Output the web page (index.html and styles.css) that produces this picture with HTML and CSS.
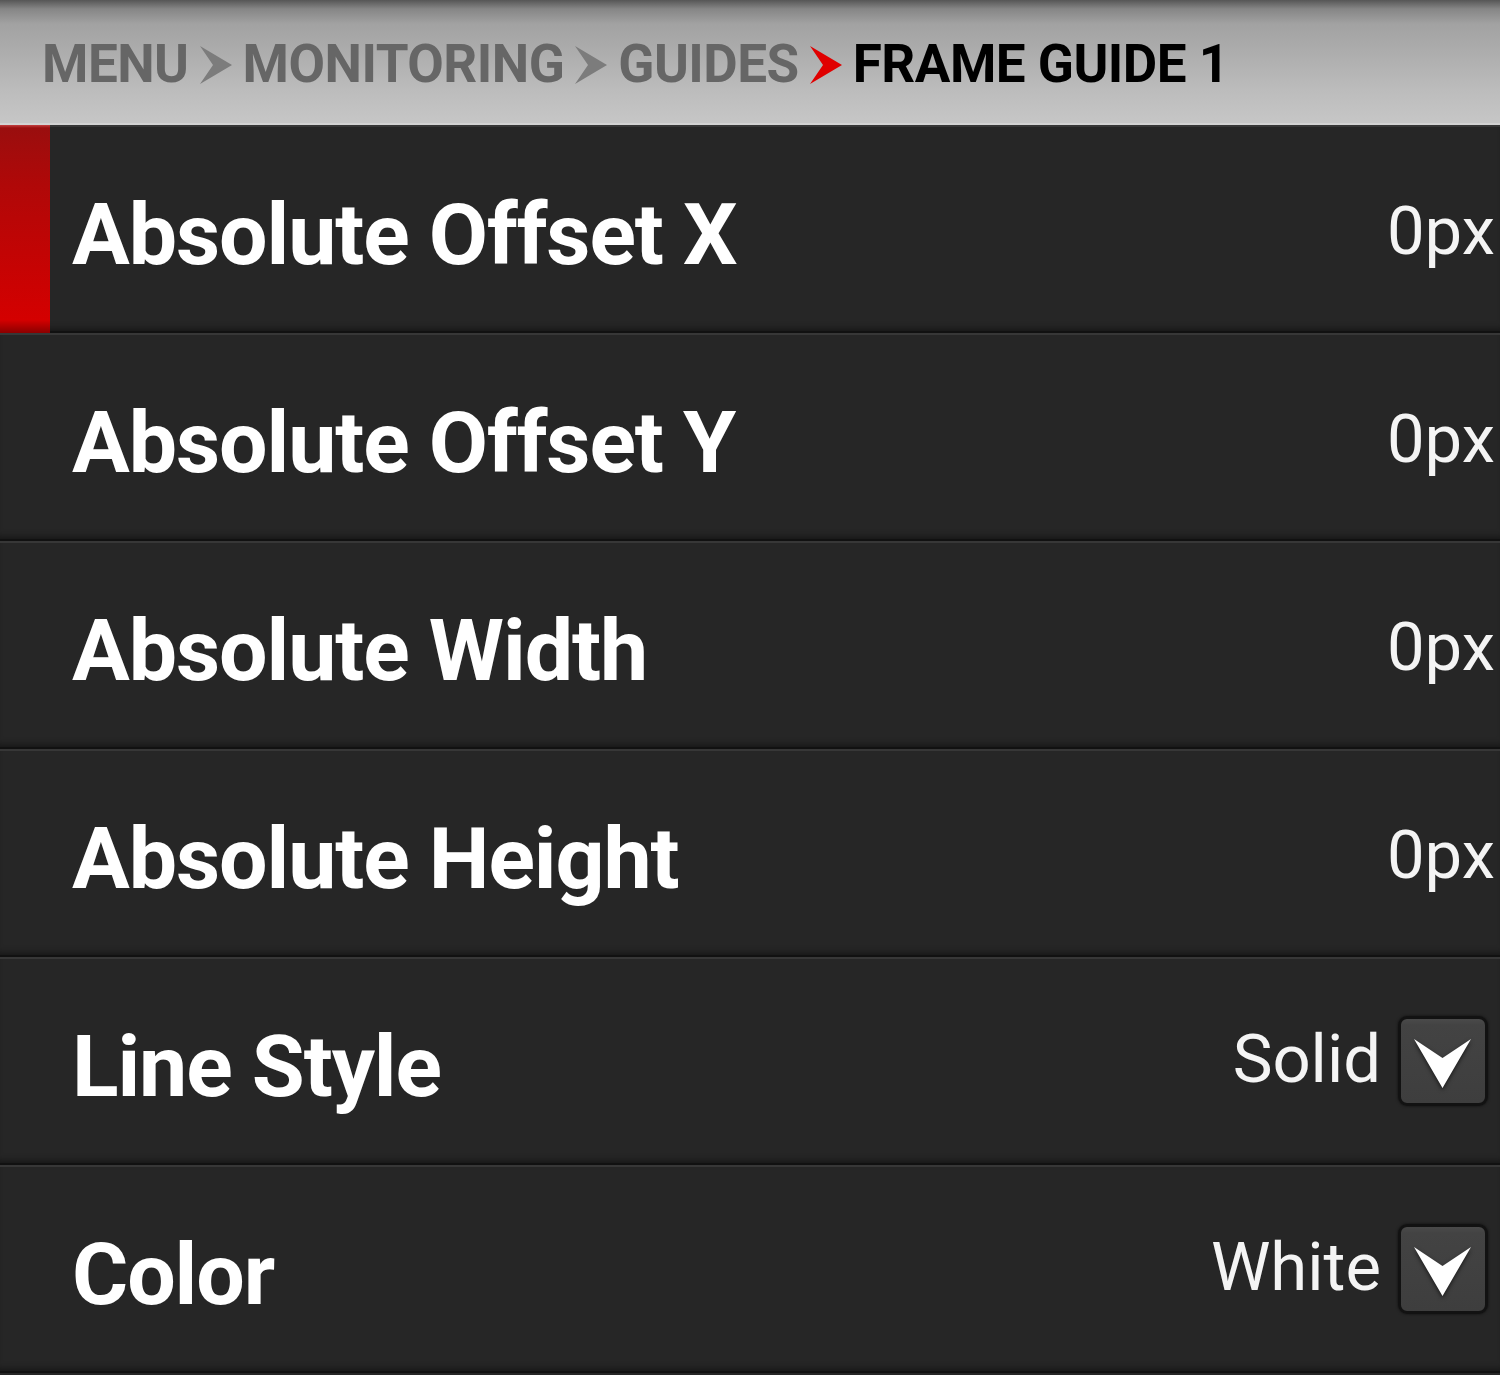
FILE: index.html
```html
<!DOCTYPE html>
<html lang="en">
<head>
<meta charset="utf-8">
<title>Frame Guide 1</title>
<link rel="stylesheet" href="styles.css">
</head>
<body>
<div class="screen">
  <header class="crumbs">
    <span class="crumb">MENU</span>
    <svg class="chev" viewBox="0 0 32 38" width="32" height="38"><path d="M0 0 L32 19 L0 38 L13 19 Z" fill="#7c7c7c"/></svg>
    <span class="crumb">MONITORING</span>
    <svg class="chev" viewBox="0 0 32 38" width="32" height="38"><path d="M0 0 L32 19 L0 38 L13 19 Z" fill="#7c7c7c"/></svg>
    <span class="crumb">GUIDES</span>
    <svg class="chev" viewBox="0 0 32 38" width="32" height="38"><path d="M0 0 L32 19 L0 38 L13 19 Z" fill="#e00000"/></svg>
    <span class="crumb current">FRAME GUIDE 1</span>
  </header>
  <main class="list">
    <div class="row selected">
      <span class="marker"></span>
      <span class="label">Absolute Offset X</span>
      <span class="value">0px</span>
    </div>
    <div class="row">
      <span class="label">Absolute Offset Y</span>
      <span class="value">0px</span>
    </div>
    <div class="row">
      <span class="label">Absolute Width</span>
      <span class="value">0px</span>
    </div>
    <div class="row">
      <span class="label">Absolute Height</span>
      <span class="value">0px</span>
    </div>
    <div class="row has-drop">
      <span class="label">Line Style</span>
      <span class="value">Solid</span>
      <span class="drop"><svg viewBox="0 0 58 50" width="58" height="50"><path d="M0 0 L28.5 19 L57 0 L28.5 49 Z" fill="#ffffff"/></svg></span>
    </div>
    <div class="row has-drop">
      <span class="label">Color</span>
      <span class="value">White</span>
      <span class="drop"><svg viewBox="0 0 58 50" width="58" height="50"><path d="M0 0 L28.5 19 L57 0 L28.5 49 Z" fill="#ffffff"/></svg></span>
    </div>
  </main>
</div>
</body>
</html>
```
FILE: styles.css
```css
html, body {
  margin: 0;
  padding: 0;
  background: #262626;
}
.screen {
  width: 1500px;
  height: 1375px;
  display: flex;
  flex-direction: column;
  overflow: hidden;
  font-family: Roboto, "Liberation Sans", sans-serif;
}
.crumbs {
  height: 125px;
  flex: none;
  display: flex;
  align-items: center;
  gap: 11px;
  padding-left: 42px;
  padding-top: 5px;
  box-sizing: border-box;
  background: linear-gradient(to bottom, #565656 0px, #868686 9px, #a2a2a2 24px, #acacac 50px, #bcbcbc 90px, #c6c6c6 122px);
  border-bottom: 2px solid #d3d3d3;
}
.crumb {
  font-weight: 700;
  font-size: 53px;
  line-height: 1;
  color: #666666;
  letter-spacing: -0.5px;
}
.crumb.current {
  color: #000000;
}
.chev {
  flex: none;
  display: block;
  margin-top: 1px;
}
.list {
  display: flex;
  flex-direction: column;
}
.row {
  position: relative;
  height: 208px;
  flex: none;
  display: flex;
  align-items: center;
  padding-left: 72px;
  padding-right: 5px;
  box-sizing: border-box;
  background: #262626;
  box-shadow: inset 0 2px 0 #373737, inset 0 -2px 0 #111111, inset 0 -9px 7px -5px rgba(0,0,0,0.45);
}
.marker {
  position: absolute;
  left: 0;
  top: 0;
  bottom: 0;
  width: 50px;
  background: linear-gradient(to bottom, #c24040 0px, #9a0e0e 3px, #b00808 60px, #d40000 195px, #8a0000 208px);
}
.label {
  flex: 1;
  font-weight: 700;
  font-size: 86px;
  letter-spacing: -1.1px;
  line-height: 1;
  color: #ffffff;
  margin-top: 12px;
}
.value {
  font-weight: 400;
  font-size: 67px;
  line-height: 1;
  color: #f4f4f4;
  margin-top: 4px;
}
.has-drop .value {
  margin-top: -4px;
}
.drop {
  flex: none;
  width: 84px;
  height: 84px;
  margin-left: 17px;
  margin-right: 7px;
  border: 3px solid #121212;
  border-radius: 9px;
  background: linear-gradient(to bottom, #4a4a4a 0px, #434343 6px, #3e3e3e 100%);
  display: flex;
  align-items: center;
  justify-content: center;
  box-shadow: 0 0 3px rgba(0,0,0,0.6);
}
.drop svg {
  display: block;
  margin-top: 6px;
  filter: drop-shadow(0 2px 2px rgba(0,0,0,0.6));
}
```
